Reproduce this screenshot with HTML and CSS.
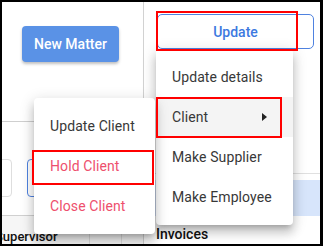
FILE: index.html
```html
<!DOCTYPE html>
<html>
<head>
<meta charset="utf-8">
<link rel="stylesheet" href="styles.css">
</head>
<body>
<div class="frame">
  <div class="left">
    <div class="top-area">
      <button class="btn-primary">New Matter</button>
    </div>
    <div class="inputs">
      <div class="field"></div>
      <div class="field focused"></div>
    </div>
    <div class="table-head">
      <div class="cell c1"><span class="clip">Supervisor</span></div>
      <div class="cell c2"></div>
      <div class="cell c3"></div>
    </div>
  </div>
  <div class="right">
    <div class="btn-row">
      <button class="btn-outline">Update</button>
    </div>
    <div class="rule"></div>
    <div class="band"></div>
    <div class="section-title">Invoices</div>
  </div>

  <div class="menu menu-main">
    <div class="item">Update details</div>
    <div class="item active"><span>Client</span><span class="caret"></span></div>
    <div class="item">Make Supplier</div>
    <div class="item">Make Employee</div>
  </div>

  <div class="menu menu-sub">
    <div class="item">Update Client</div>
    <div class="item danger">Hold Client</div>
    <div class="item danger">Close Client</div>
  </div>

  <div class="mark mark-update"></div>
  <div class="mark mark-client"></div>
  <div class="mark mark-hold"></div>
</div>
</body>
</html>
```
FILE: styles.css
```css
* { box-sizing: border-box; }
html, body { margin: 0; padding: 0; background: #fff; }
body { font-family: Roboto, "Noto Sans", Arial, sans-serif; }

.frame {
  position: relative;
  width: 323px;
  height: 246px;
  border-style: solid;
  border-color: #000;
  border-width: 2px 3px 2px 2px;
  display: flex;
  overflow: hidden;
  background: #fff;
}

.left {
  width: 142px;
  flex: none;
  border-right: 1px solid #d2d2d2;
  display: flex;
  flex-direction: column;
  overflow: hidden;
}

.top-area {
  height: 125px;
  padding: 24px 0 0 20px;
  border-bottom: 1px solid #cfcfcf;
}

.btn-primary {
  width: 97px;
  height: 36px;
  border: none;
  border-radius: 4px;
  background: #5a92e6;
  color: #fff;
  font-family: Roboto, Arial, sans-serif;
  font-weight: 500;
  font-size: 14px;
  padding: 0;
  box-shadow: 0 2px 3px rgba(0,0,0,0.25);
}

.inputs {
  display: flex;
  gap: 15px;
  margin-top: 37px;
  height: 40px;
}
.field {
  width: 40px;
  margin-left: -30px;
  border: 1px solid #dedede;
  border-radius: 4px;
  flex: none;
}
.field.focused {
  margin-left: 0;
  width: 110px;
  border-color: #4f82e0;
}

.table-head {
  margin-top: 18px;
  border-top: 1px solid #d0d0d0;
  background: #f6f6f6;
  display: flex;
  height: 30px;
}
.cell { height: 100%; }
.c1 { width: 88px; border-right: 1px solid #dcdcdc; overflow: hidden; }
.c2 { width: 32px; border-right: 1px solid #dcdcdc; }
.c3 { flex: 1; }
.clip {
  display: block;
  margin: 13px 0 0 -7px;
  font-size: 13px;
  font-weight: 500;
  color: #111;
  white-space: nowrap;
}

.right {
  flex: 1;
  display: flex;
  flex-direction: column;
}
.btn-row { padding: 12px 6px 0 13px; }
.btn-outline {
  width: 100%;
  height: 35px;
  border: 1px solid #4f82e0;
  border-radius: 5px;
  background: #fff;
  color: #3c79e0;
  font-family: Roboto, Arial, sans-serif;
  font-weight: 500;
  font-size: 14px;
  padding: 0;
}
.rule {
  margin-top: 124px;
  height: 1px;
  background: #e0e0e0;
}
.band {
  margin-top: 6px;
  height: 36px;
  background: #d7e5fb;
}
.section-title {
  margin: 8px 0 0 12px;
  font-size: 14px;
  font-weight: 500;
  color: #111;
  line-height: 20px;
}

.menu {
  position: absolute;
  background: #fff;
  border-radius: 4px;
  padding: 8px 0;
  box-shadow: 0 5px 5px -3px rgba(0,0,0,0.2), 0 8px 10px 1px rgba(0,0,0,0.14), 0 3px 14px 2px rgba(0,0,0,0.12);
}
.menu-main { left: 154px; top: 47px; width: 137px; }
.menu-sub { left: 32px; top: 96px; width: 121px; }

.item {
  height: 40px;
  display: flex;
  align-items: center;
  justify-content: space-between;
  padding: 0 26px 0 16px;
  font-size: 14px;
  color: #383838;
  letter-spacing: 0.1px;
  white-space: nowrap;
}
.item.active { background: #f4f4f4; }
.item.danger { color: #ee4f6d; }
.caret {
  width: 0;
  height: 0;
  border-left: 5px solid #222;
  border-top: 4.5px solid transparent;
  border-bottom: 4.5px solid transparent;
}

.mark {
  position: absolute;
  border: 2px solid #ff0000;
}
.mark-update { left: 154px; top: 9px; width: 142px; height: 40px; }
.mark-client { left: 154px; top: 95px; width: 126px; height: 41px; }
.mark-hold { left: 30px; top: 148px; width: 122px; height: 35px; }
```
